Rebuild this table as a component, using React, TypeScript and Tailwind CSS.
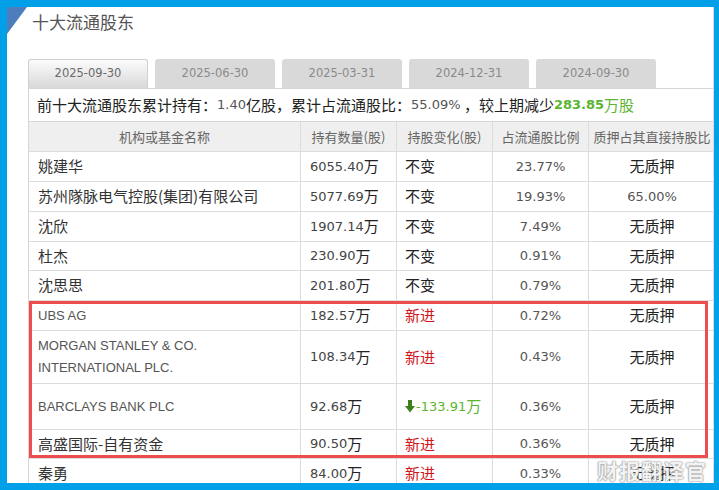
import type { ReactNode } from "react";

type Row = {
  name: ReactNode;
  key: string;
  en?: boolean;
  qty: string;
  change: ReactNode;
  ratio: string;
  pledge: string;
  h: string;
};

const cjk = "font-['Noto_Sans_CJK_SC',sans-serif]";
const num = "font-['DejaVu_Sans','Noto_Sans_CJK_SC',sans-serif]";

function DownArrow() {
  return (
    <svg width="10" height="13" viewBox="0 0 10 13" className="mr-[1px]">
      <rect x="3" y="0" width="4" height="7" fill="#3d7e1f" />
      <polygon points="0,6 10,6 5,12.5" fill="#3d7e1f" />
    </svg>
  );
}

const unchanged = <span className="text-[#222]">不变</span>;
const newIn = <span className="text-[#d0161b]">新进</span>;

const rows: Row[] = [
  { key: "a", name: "姚建华", qty: "6055.40", change: unchanged, ratio: "23.77%", pledge: "无质押", h: "h-[30px]" },
  { key: "b", name: "苏州隊脉电气控股(集团)有限公司", qty: "5077.69", change: unchanged, ratio: "19.93%", pledge: "65.00%", h: "h-[30px]" },
  { key: "c", name: "沈欣", qty: "1907.14", change: unchanged, ratio: "7.49%", pledge: "无质押", h: "h-[30px]" },
  { key: "d", name: "杜杰", qty: "230.90", change: unchanged, ratio: "0.91%", pledge: "无质押", h: "h-[29px]" },
  { key: "e", name: "沈思思", qty: "201.80", change: unchanged, ratio: "0.79%", pledge: "无质押", h: "h-[30px]" },
  { key: "f", name: "UBS AG", en: true, qty: "182.57", change: newIn, ratio: "0.72%", pledge: "无质押", h: "h-[30px]" },
  {
    key: "g",
    name: (
      <>
        MORGAN STANLEY &amp; CO.
        <br />
        INTERNATIONAL PLC.
      </>
    ),
    en: true,
    qty: "108.34",
    change: newIn,
    ratio: "0.43%",
    pledge: "无质押",
    h: "h-[53px]",
  },
  {
    key: "h",
    name: "BARCLAYS BANK PLC",
    en: true,
    qty: "92.68",
    change: (
      <span className="flex items-center text-[#5cb531]">
        <DownArrow />
        <span className={num + " text-[13px]"}>-133.91</span>
        <span className={cjk + " text-[15px]"}>万</span>
      </span>
    ),
    ratio: "0.36%",
    pledge: "无质押",
    h: "h-[46px]",
  },
  { key: "i", name: "高盛国际-自有资金", qty: "90.50", change: newIn, ratio: "0.36%", pledge: "无质押", h: "h-[29px]" },
  { key: "j", name: "秦勇", qty: "84.00", change: newIn, ratio: "0.33%", pledge: "无质押", h: "h-[30px]" },
];

const tabs = ["2025-09-30", "2025-06-30", "2025-03-31", "2024-12-31", "2024-09-30"];

export default function App() {
  return (
    <div className="w-[719px] h-[490px] bg-[#00a0e9] pt-[7px] pl-[7px] pr-[5px] pb-[7px]">
      <div className="relative w-full h-full bg-white overflow-hidden border-r border-[#dcdcdc]">
        {/* corner triangle */}
        <svg width="20" height="27" viewBox="0 0 20 27" className="absolute left-0 top-0">
          <polygon points="0,0 20,0 0,27" fill="#4e7dbd" />
        </svg>

        <div className={"pl-[25px] h-[30px] leading-[30px] text-[17px] text-[#555] " + cjk}>
          十大流通股东
        </div>

        {/* tabs */}
        <div className="flex gap-[7px] ml-[21px] mt-[22px]">
          {tabs.map((t, i) => (
            <div
              key={t}
              className={
                "w-[120px] h-[29px] rounded-t-[3px] flex items-center justify-center text-[11.5px] " +
                num +
                (i === 0
                  ? " bg-gradient-to-b from-[#fcfcfc] to-[#d8d8d8] border border-b-0 border-[#d0d0d0] text-[#6a6a6a]"
                  : " bg-[#d9d9d9] text-[#8a8a8a]")
              }
            >
              {t}
            </div>
          ))}
        </div>

        <div className="ml-[21px] border-t border-l border-[#d6d6d6]">
          {/* summary */}
          <div className={"h-[32px] flex items-center pl-[8px] text-[15px] text-[#222] " + cjk}>
            前十大流通股东累计持有：
            <span className={num + " text-[13px] text-[#555]"}>1.40</span>亿股，累计占流通股比：
            <span className={num + " text-[13px] text-[#555]"}>55.09%</span>&nbsp;，较上期减少
            <span className={num + " text-[13px] text-[#5cb531] font-semibold"}>283.85</span>
            <span className="text-[#5cb531]">万股</span>
          </div>

          {/* table */}
          <div className="w-[720px] border-t border-[#d6d6d6]">
            <div className={"flex h-[30px] bg-[#efefef] border-b border-[#dcdcdc] text-[13px] text-[#666] " + cjk}>
              <div className="w-[272px] flex items-center justify-center border-r border-[#dcdcdc]">机构或基金名称</div>
              <div className="w-[96px] flex items-center justify-center border-r border-[#dcdcdc]">持有数量(股)</div>
              <div className="w-[96px] flex items-center justify-center border-r border-[#dcdcdc]">持股变化(股)</div>
              <div className="w-[96px] flex items-center justify-center border-r border-[#dcdcdc]">占流通股比例</div>
              <div className="w-[126px] flex items-center justify-center">质押占其直接持股比</div>
            </div>
            {rows.map((r) => (
              <div key={r.key} className={"flex border-b border-[#dcdcdc] " + r.h}>
                <div
                  className={
                    "w-[272px] flex items-center pl-[9px] whitespace-nowrap border-r border-[#dcdcdc] " +
                    (r.en
                      ? "font-['Liberation_Sans',sans-serif] text-[13px] text-[#555] leading-[22px]"
                      : cjk + " text-[15px] text-[#333]")
                  }
                >
                  <div>{r.name}</div>
                </div>
                <div className="w-[96px] flex items-center pl-[9px] border-r border-[#dcdcdc]">
                  <span className={num + " text-[13px] text-[#444]"}>{r.qty}</span>
                  <span className={cjk + " text-[15px] text-[#222]"}>万</span>
                </div>
                <div className={"w-[96px] flex items-center pl-[8px] border-r border-[#dcdcdc] text-[15px] " + cjk}>
                  {r.change}
                </div>
                <div className={"w-[96px] flex items-center justify-center border-r border-[#dcdcdc] text-[13px] text-[#555] " + num}>
                  {r.ratio}
                </div>
                <div
                  className={
                    "w-[126px] flex items-center justify-center " +
                    (r.pledge.endsWith("%") ? num + " text-[13px] text-[#555]" : cjk + " text-[15px] text-[#222]")
                  }
                >
                  {r.pledge}
                </div>
              </div>
            ))}
          </div>
        </div>

        {/* highlight box */}
        <div className="absolute left-[22px] top-[294px] w-[679px] h-[157px] border-[3px] border-[#ee4d4d]" />

        {/* watermark */}
        <div
          className={
            "absolute right-[6px] bottom-[0px] text-[21px] leading-[26px] text-white/90 font-bold tracking-[1px] [text-shadow:0_0_2px_#888,0_0_1px_#666] " +
            cjk
          }
        >
          财报翻译官
        </div>
      </div>
    </div>
  );
}
